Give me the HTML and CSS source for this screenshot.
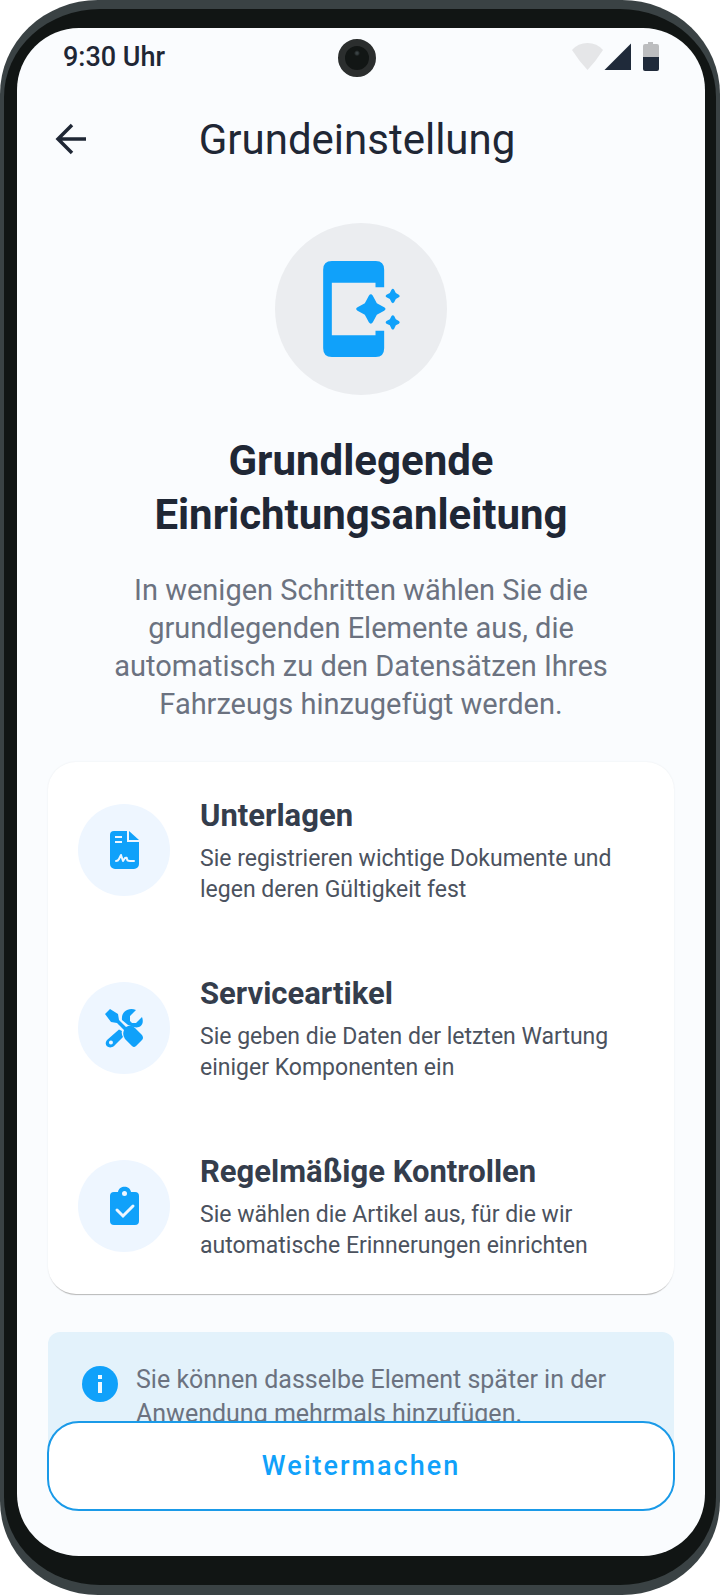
FILE: index.html
```html
<!DOCTYPE html>
<html lang="de">
<head>
    <meta charset="UTF-8">
    <meta name="viewport" content="width=device-width, initial-scale=1.0">
    <title>Grundeinstellung</title>
    <link rel="stylesheet" href="styles.css">
</head>
<body>
    <div class="phone">
        <div class="bezel">
            <div class="screen">
                <div class="status-bar">
                    <span class="time">9:30 Uhr</span>
                    <span class="camera"></span>
                    <svg class="status-icons" viewBox="0 0 87 30" aria-hidden="true">
                        <path fill="#e5e6e8" d="M0 8Q6 1 15.500 1T31 8Q24 19 15.500 28Q7 19 0 8Z"/>
                        <path fill="#1f2a3a" d="M59 1.500V28H32.500Z"/>
                        <path fill="#bcbdbf" d="M76 0h5v2h4a2 2 0 0 1 2 2v11H71V4a2 2 0 0 1 2-2h3Z"/>
                        <path fill="#1f2a3a" d="M71 15h16v12a2 2 0 0 1-2 2H73a2 2 0 0 1-2-2Z"/>
                    </svg>
                </div>

                <header class="app-bar">
                    <button type="button" class="back" aria-label="Zurück">
                        <svg viewBox="0 0 32 32" aria-hidden="true">
                            <path d="M17 2L3 16l14 14M3 16h28" fill="none" stroke="#1f2735" stroke-width="3.500"/>
                        </svg>
                    </button>
                    <h1>Grundeinstellung</h1>
                </header>

                <main class="content">
                    <section class="hero">
                        <div class="hero-icon">
                            <svg viewBox="188 152 230 288" aria-hidden="true">
                                <path fill="#10a1fa" d="M214 152H346Q371 152 371 178V231H345V217H214V375H345V361H371V414Q371 440 346 440H214Q188 440 188 414V178Q188 152 214 152Z"/>
                                <path fill="#10a1fa" d="M325 256Q331 248 337 256L349 279L371 291Q379 296 371 301L349 313L337 336Q331 344 325 336L313 313L291 301Q283 296 291 291L313 279Z"/>
                                <path fill="#10a1fa" d="M393 238Q397 233 401 238L406 248L415 253Q420 257 415 261L406 266L401 276Q397 281 393 276L388 266L378 261Q373 257 378 253L388 248Z"/>
                                <path fill="#10a1fa" d="M393 317Q397 312 401 317L406 327L415 332Q420 336 415 340L406 345L401 355Q397 360 393 355L388 345L378 340Q373 336 378 332L388 327Z"/>
                            </svg>
                        </div>
                        <h2>Grundlegende Einrichtungsanleitung</h2>
                        <p>In wenigen Schritten wählen Sie die grundlegenden Elemente aus, die automatisch zu den Datensätzen Ihres Fahrzeugs hinzugefügt werden.</p>
                    </section>

                    <ul class="card">
                        <li class="item">
                            <div class="item-icon">
                                <svg viewBox="0 0 40 40" aria-hidden="true">
                                    <path fill="#10a1fa" d="M10 1H23V12H35V34a5 5 0 0 1-5 5H11a5 5 0 0 1-5-5V5a4 4 0 0 1 4-4Z"/>
                                    <path fill="#10a1fa" d="M25 1L35 10H25Z"/>
                                    <path d="M11 7h7M11 12h7" stroke="#eef6ff" stroke-width="2"/>
                                    <path d="M12 31q2 0 3-2l2-4 2 6 2-3q2-1 2 1t3 2h4" fill="none" stroke="#eef6ff" stroke-width="2" stroke-linecap="round" stroke-linejoin="round"/>
                                </svg>
                            </div>
                            <div class="item-text">
                                <h3>Unterlagen</h3>
                                <p>Sie registrieren wichtige Dokumente und legen deren Gültigkeit fest</p>
                            </div>
                        </li>
                        <li class="item">
                            <div class="item-icon">
                                <svg viewBox="0 0 40 40" aria-hidden="true">
                                    <!-- wrench -->
                                    <path fill="#10a1fa" fill-rule="evenodd" d="M15 21.500L3 32C-1 37 5 42 10 38L19 29Q17 25 18 23ZM7 32.500a2 2 0 1 1-.1 4 2 2 0 0 1 .1-4Z"/>
                                    <path fill="#10a1fa" d="M18 12C17 4 24-1 32 2L26 8V13L28 15H32L38 9C41 17 35 22 27 18L24 17Z"/>
                                    <!-- screwdriver -->
                                    <path fill="#10a1fa" d="M6 1L14 6L15 12L22 19Q27 16 31 20L38 27Q40 30 38 32L32 38Q30 40 28 38L21 31Q18 27 20 22L13 15L7 14L1 6Z"/>
                                </svg>
                            </div>
                            <div class="item-text">
                                <h3>Serviceartikel</h3>
                                <p>Sie geben die Daten der letzten Wartung einiger Komponenten ein</p>
                            </div>
                        </li>
                        <li class="item">
                            <div class="item-icon">
                                <svg viewBox="0 0 40 40" aria-hidden="true">
                                    <path fill="#10a1fa" d="M10 6h4C15-1 26-1 27 6h4a4 4 0 0 1 4 4v25a4 4 0 0 1-4 4H10a4 4 0 0 1-4-4V10a4 4 0 0 1 4-4Z"/>
                                    <circle cx="20.500" cy="7.500" r="2.500" fill="#eef6ff"/>
                                    <path d="M13 24l6 6 10-10" fill="none" stroke="#eef6ff" stroke-width="3" stroke-linecap="round"/>
                                </svg>
                            </div>
                            <div class="item-text">
                                <h3>Regelmäßige Kontrollen</h3>
                                <p>Sie wählen die Artikel aus, für die wir automatische Erinnerungen einrichten</p>
                            </div>
                        </li>
                    </ul>

                    <div class="info">
                        <svg viewBox="0 0 36 36" aria-hidden="true">
                            <circle cx="18" cy="18" r="18" fill="#10a1fa"/>
                            <path d="M16 9h4v4h-4ZM16 16h4v11h-4Z" fill="#f0f9ff"/>
                        </svg>
                        <p>Sie können dasselbe Element später in der Anwendung mehrmals hinzufügen.</p>
                    </div>
                </main>

                <footer class="footer">
                    <button type="button" class="button">Weitermachen</button>
                </footer>
            </div>
        </div>
    </div>
</body>
</html>
```
FILE: styles.css
```css
* {
    box-sizing: border-box;
}
body {
    margin: 0;
    background-color: #fff;
    font-family: Roboto, 'Liberation Sans', sans-serif;
    color: #1f2735;
}
h1, h2, h3, p, ul {
    margin: 0;
    padding: 0;
}
button {
    font-family: inherit;
    cursor: pointer;
}

/* Device frame */
.phone {
    display: flex;
    min-height: 100vh;
    padding: 9px 4px 10px;
    background-color: #3a4244;
    border-radius: 98px / 94px;
}
.bezel {
    display: flex;
    flex: 1;
    padding: 19px 11px 29px 13px;
    background-color: #111514;
    border-radius: 96px / 88px;
}
.screen {
    position: relative;
    flex: 1;
    overflow: hidden;
    background-color: #fafcfe;
    border-radius: 62px;
}

/* Status bar */
.status-bar {
    display: flex;
    justify-content: space-between;
    align-items: center;
    height: 58px;
    padding: 0 46px;
}
.time {
    font-size: 27px;
    font-weight: 500;
}
.camera {
    position: absolute;
    top: 11px;
    left: calc(50% - 23px);
    width: 38px;
    height: 38px;
    border: 7px solid #2b2e2e;
    border-radius: 50%;
    background: radial-gradient(circle at 50% 30%, #3a4244 1px, #121615 3px);
}
.status-icons {
    width: 87px;
    height: 30px;
}

/* App bar */
.app-bar {
    display: grid;
    grid-template-columns: 40px 1fr 40px;
    align-items: center;
    height: 106px;
    padding: 0 40px 0 32px;
}
.back {
    display: flex;
    padding: 4px 6px;
    border: none;
    background: none;
}
.back svg {
    flex: none;
    width: 32px;
    height: 32px;
}
h1 {
    font-size: 42px;
    font-weight: 400;
    text-align: center;
}

/* Content */
.content {
    padding: 31px 31px 0;
}
.hero {
    text-align: center;
}
.hero-icon {
    display: flex;
    justify-content: center;
    align-items: center;
    width: 172px;
    height: 172px;
    margin: 0 auto 39px;
    border-radius: 50%;
    background-color: #ebedf0;
}
.hero-icon svg {
    width: 77px;
    height: 96px;
}
h2 {
    font-size: 42px;
    font-weight: 700;
    line-height: 54px;
    max-width: 500px;
    margin: 0 auto;
}
.hero p {
    max-width: 510px;
    margin: 29px auto 0;
    font-size: 29px;
    line-height: 38px;
    color: #6b7280;
}
.card {
    margin-top: 39px;
    padding: 24px 0;
    list-style: none;
    background-color: #fff;
    border-radius: 28px;
    box-shadow: 0 2px 1px -1px #b8b8b8, 0 0 2px #e8ebee;
}
.item {
    display: flex;
    align-items: center;
    gap: 30px;
    min-height: 128px;
    padding: 0 30px;
}
.item + .item {
    margin-top: 50px;
}
.item-icon {
    display: flex;
    flex: none;
    justify-content: center;
    align-items: center;
    width: 92px;
    height: 92px;
    border-radius: 50%;
    background-color: #eef6ff;
}
.item-icon svg {
    width: 40px;
    height: 40px;
}
h3 {
    font-size: 31px;
    font-weight: 700;
    line-height: 42px;
    color: #343d4c;
}
.item p {
    margin-top: 6px;
    font-size: 23px;
    line-height: 31px;
    color: #4b525e;
}
.info {
    display: flex;
    align-items: flex-start;
    gap: 18px;
    margin-top: 38px;
    padding: 31px 34px;
    background-color: #e3f2fb;
    border-radius: 12px;
}
.info svg {
    flex: none;
    width: 36px;
    height: 36px;
    margin-top: 3px;
}
.info p {
    font-size: 25px;
    line-height: 34px;
    color: #6b7280;
}

.footer {
    position: absolute;
    right: 30px;
    bottom: 45px;
    left: 30px;
}
.button {
    width: 100%;
    height: 90px;
    border: 2px solid #1a9ae8;
    border-radius: 32px;
    background-color: #fff;
    color: #10a1fa;
    font-size: 27px;
    font-weight: 500;
    letter-spacing: 2px;
}
```
